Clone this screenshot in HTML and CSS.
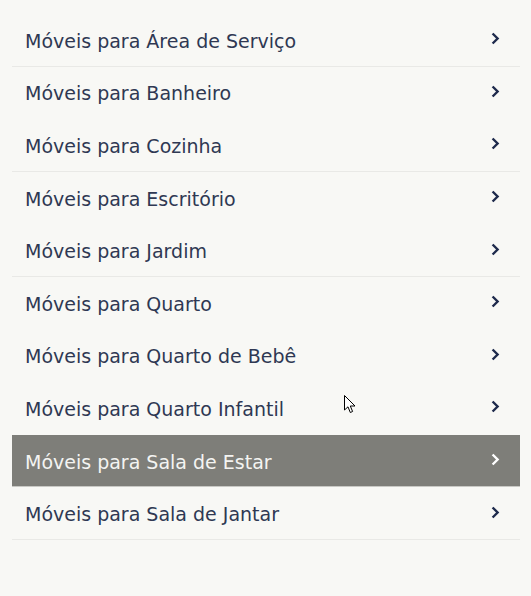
FILE: index.html
```html
<!DOCTYPE html>
<html lang="pt">
<head>
<meta charset="utf-8">
<link rel="stylesheet" href="styles.css">
</head>
<body>
<ul class="menu">
  <li class="item line"><span class="label">Móveis para Área de Serviço</span><svg class="chev" viewBox="0 0 9 13"><path d="M1.6 1.5 L6.6 6.5 L1.6 11.5"/></svg></li>
  <li class="item"><span class="label">Móveis para Banheiro</span><svg class="chev" viewBox="0 0 9 13"><path d="M1.6 1.5 L6.6 6.5 L1.6 11.5"/></svg></li>
  <li class="item line"><span class="label">Móveis para Cozinha</span><svg class="chev" viewBox="0 0 9 13"><path d="M1.6 1.5 L6.6 6.5 L1.6 11.5"/></svg></li>
  <li class="item"><span class="label">Móveis para Escritório</span><svg class="chev" viewBox="0 0 9 13"><path d="M1.6 1.5 L6.6 6.5 L1.6 11.5"/></svg></li>
  <li class="item line"><span class="label">Móveis para Jardim</span><svg class="chev" viewBox="0 0 9 13"><path d="M1.6 1.5 L6.6 6.5 L1.6 11.5"/></svg></li>
  <li class="item"><span class="label">Móveis para Quarto</span><svg class="chev" viewBox="0 0 9 13"><path d="M1.6 1.5 L6.6 6.5 L1.6 11.5"/></svg></li>
  <li class="item"><span class="label">Móveis para Quarto de Bebê</span><svg class="chev" viewBox="0 0 9 13"><path d="M1.6 1.5 L6.6 6.5 L1.6 11.5"/></svg></li>
  <li class="item"><span class="label">Móveis para Quarto Infantil</span><svg class="chev" viewBox="0 0 9 13"><path d="M1.6 1.5 L6.6 6.5 L1.6 11.5"/></svg></li>
  <li class="item active"><span class="label">Móveis para Sala de Estar</span><svg class="chev" viewBox="0 0 9 13"><path d="M1.6 1.5 L6.6 6.5 L1.6 11.5"/></svg></li>
  <li class="item line"><span class="label">Móveis para Sala de Jantar</span><svg class="chev" viewBox="0 0 9 13"><path d="M1.6 1.5 L6.6 6.5 L1.6 11.5"/></svg></li>
</ul>
<svg class="cursor" viewBox="0 0 12 19" width="12" height="19"><path d="M0.5 0.5 L0.5 15 L4 11.8 L6.3 17.5 L8.6 16.5 L6.3 11 L11 11 Z" fill="#fff" stroke="#000" stroke-width="1"/></svg>
</body>
</html>
```
FILE: styles.css
```css
html, body {
  margin: 0;
  padding: 0;
  background: #f8f8f5;
}
body {
  padding: 14px 11px 0 12px;
  font-family: "DejaVu Sans", sans-serif;
  position: relative;
}
.menu {
  list-style: none;
  margin: 0;
  padding: 0;
}
.item {
  display: flex;
  align-items: center;
  justify-content: space-between;
  height: 52.6px;
  box-sizing: border-box;
  padding: 0 20px 0 13px;
  color: #2f3853;
  font-size: 19px;
  font-weight: 400;
  border-bottom: 1px solid transparent;
}
.item.line {
  border-bottom-color: #e9e9e6;
}
.item.active {
  background: #7e7e79;
  color: #f4f4f2;
  border-bottom-color: #c9c9c5;
}
.label {
  line-height: 24px;
  padding-top: 2px;
}
.chev {
  width: 9px;
  height: 13px;
  margin-top: -2px;
  fill: none;
  stroke: #1e2a4c;
  stroke-width: 2.4;
}
.item.active .chev {
  stroke: #ffffff;
}
.cursor {
  position: absolute;
  left: 344px;
  top: 395px;
}
```
